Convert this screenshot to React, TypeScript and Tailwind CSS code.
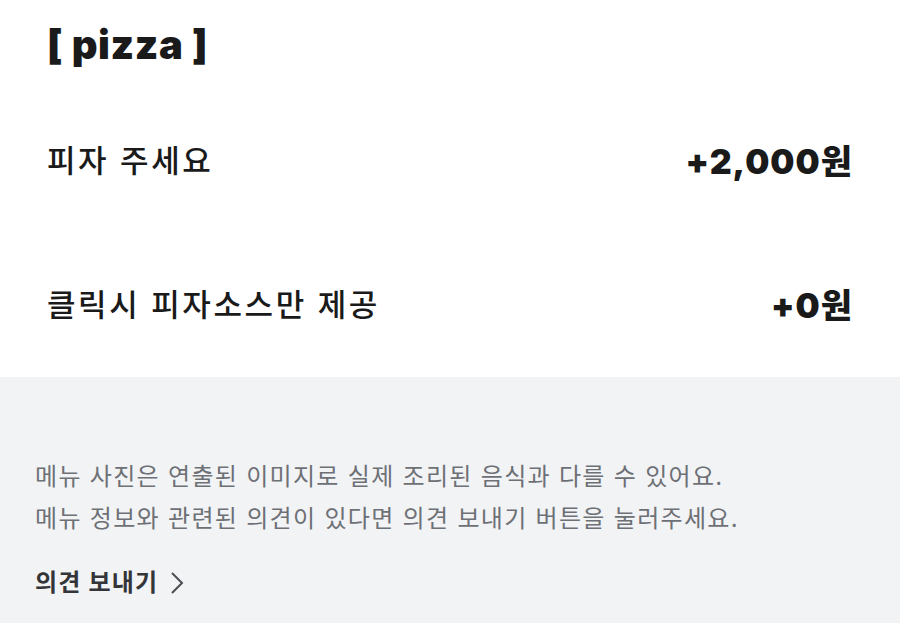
import React from 'react';

type Option = {
  name: string;
  price: string;
};

const options: Option[] = [
  { name: '피자 주세요', price: '+2,000원' },
  { name: '클릭시 피자소스만 제공', price: '+0원' },
];

const korean = "font-['Inter','Noto_Sans_CJK_KR',sans-serif]";

export default function App() {
  return (
    <div className={`w-[900px] h-[624px] overflow-hidden bg-white ${korean}`}>
      <section className="bg-white pl-[47px] pr-[48px]">
        <div className="h-[89px] flex items-center">
          <h2 className="text-[40px] leading-none font-black text-[#1a1a1a] tracking-[0.6px]">[ pizza ]</h2>
        </div>
        {options.map((opt) => (
          <div key={opt.name} className="h-[144px] flex items-center justify-between">
            <span className="text-[31px] text-[#1a1a1a] font-medium tracking-[2.6px]">{opt.name}</span>
            <span className="text-[34px] text-[#1a1a1a] font-black tracking-[1px] -mr-[1px]">{opt.price}</span>
          </div>
        ))}
      </section>
      <footer className="bg-[#f2f3f5] h-[246px] pl-[35px] pt-[79px]">
        <p className="text-[24px] leading-[42px] text-[#6d7075] tracking-[1.3px]">
          메뉴 사진은 연출된 이미지로 실제 조리된 음식과 다를 수 있어요.
          <br />
          메뉴 정보와 관련된 의견이 있다면 의견 보내기 버튼을 눌러주세요.
        </p>
        <button type="button" className="mt-[26px] flex items-center gap-[12px] text-[24px] leading-[34px] font-bold text-[#333538] tracking-[1.2px]">
          의견 보내기
          <svg width="14" height="24" viewBox="0 0 14 24" fill="none" stroke="#4a4d52" strokeWidth="2">
            <path d="M2 2l10 10-10 10" />
          </svg>
        </button>
      </footer>
    </div>
  );
}
